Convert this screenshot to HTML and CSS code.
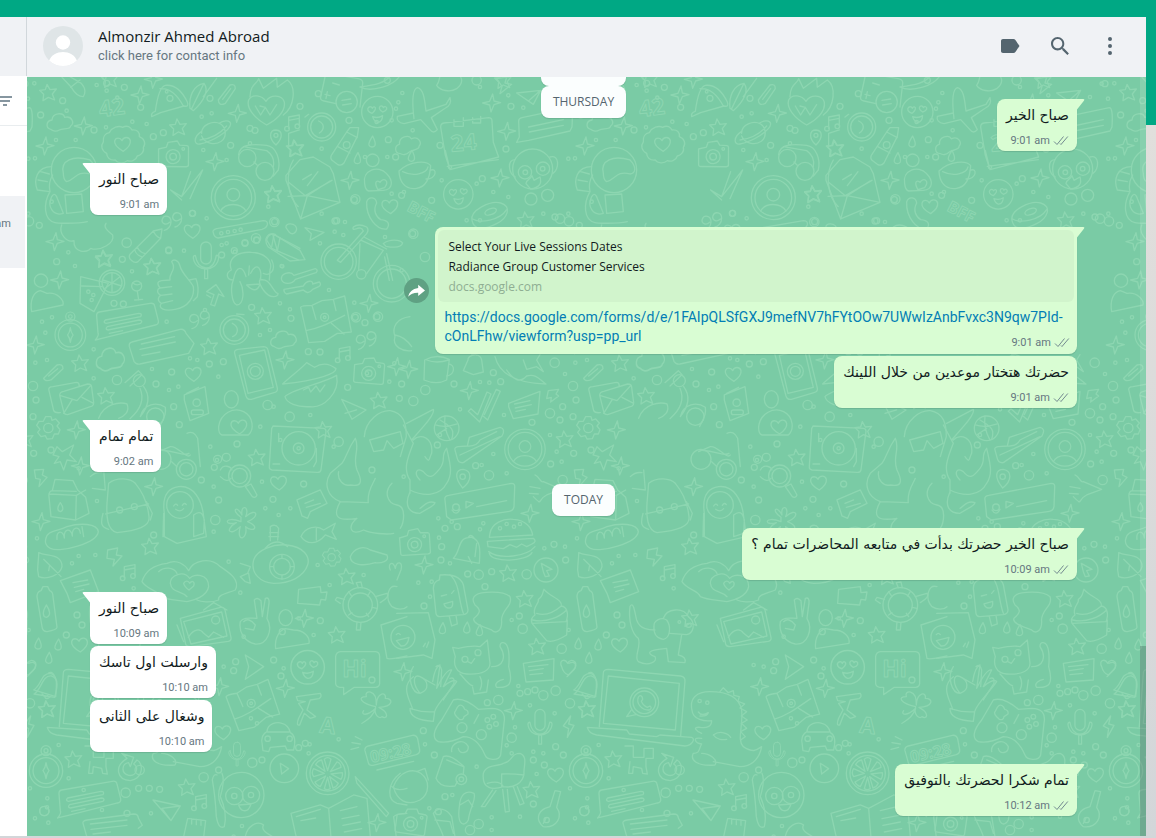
FILE: index.html
```html
<!DOCTYPE html>
<html lang="en">
  <head>
    <meta charset="UTF-8" />
    <meta name="viewport" content="width=device-width, initial-scale=1.0" />
    <title>Almonzir Ahmed Abroad</title>
    <link rel="stylesheet" href="styles.css">
  </head>
  <body>
    <!-- shared icons -->
    <svg class="defs" width="0" height="0" aria-hidden="true">
      <symbol id="ticks" viewBox="0 0 16 11">
        <path d="M1 6.500 4 9.500 10.500 1.500M7 8.500 8 9.500 14.800 1.500" />
      </symbol>
      <symbol id="tail-out" viewBox="0 0 8 13">
        <path d="M0 0h6.200c1.300 0 1.500.8.700 1.700L0 10.500z" />
      </symbol>
      <symbol id="tail-in" viewBox="0 0 8 13">
        <path d="M8 0H1.800C.5 0 .3.800 1.100 1.700L8 10.500z" />
      </symbol>
    </svg>

    <div class="app">
      <aside class="side">
        <div class="side-header"></div>
        <div class="side-search">
          <button type="button" class="icon-button" aria-label="Filter chats">
            <svg width="20" height="20" viewBox="0 0 20 20"><path d="M3 6h14M5 10h10M8 14h4" /></svg>
          </button>
        </div>
        <div class="side-row"></div>
        <div class="side-row active"><span>am</span></div>
      </aside>

      <main class="chat">
        <header class="chat-header">
          <svg class="avatar" width="40" height="40" viewBox="0 0 40 40" aria-hidden="true">
            <clipPath id="round"><circle cx="20" cy="20" r="20" /></clipPath>
            <g clip-path="url(#round)">
              <rect width="40" height="40" fill="#dfe5e7" />
              <circle cx="20" cy="16.500" r="7.200" fill="#fff" />
              <path d="M6 35c2-6 8-9 14-9s12 3 14 9l-4 5H10z" fill="#fff" />
            </g>
          </svg>
          <div class="contact">
            <h1>Almonzir Ahmed Abroad</h1>
            <p>click here for contact info</p>
          </div>
          <div class="actions">
            <button type="button" class="icon-button" aria-label="Label">
              <svg width="24" height="24" viewBox="0 0 24 24"><path d="M5 5h10.500c.8 0 1.400.4 1.900 1L21.500 12l-4.100 6c-.5.600-1.100 1-1.900 1H5c-1.200 0-2-.8-2-2V7c0-1.200.8-2 2-2z" /></svg>
            </button>
            <button type="button" class="icon-button" aria-label="Search">
              <svg width="24" height="24" viewBox="0 0 24 24"><path d="M15.900 14.300H15l-.3-.3c1-1.100 1.600-2.700 1.600-4.300 0-3.700-3-6.700-6.700-6.700S3 6 3 9.700s3 6.700 6.700 6.700c1.600 0 3.200-.6 4.300-1.600l.3.300v.8l5.100 5.100 1.500-1.500-5-5.200zm-6.200 0c-2.600 0-4.600-2.100-4.600-4.600s2.100-4.600 4.600-4.600 4.600 2.100 4.600 4.600-2 4.600-4.600 4.600z" /></svg>
            </button>
            <button type="button" class="icon-button" aria-label="Menu">
              <svg width="24" height="24" viewBox="0 0 24 24"><path d="M12 7a2 2 0 1 0 0-4 2 2 0 0 0 0 4zm0 7a2 2 0 1 0 0-4 2 2 0 0 0 0 4zm0 7a2 2 0 1 0 0-4 2 2 0 0 0 0 4z" /></svg>
            </button>
          </div>
        </header>

        <div class="conversation">
          <!-- doodle wallpaper, one 540px tile repeated sideways -->
          <svg class="wallpaper" aria-hidden="true">
            <defs>
              <marker id="m-dot" class="doodle-mark" viewBox="-20 -20 40 40" markerWidth="40" markerHeight="40" markerUnits="userSpaceOnUse"><circle r="5" /></marker>
              <marker id="m-ring" class="doodle-mark" viewBox="-20 -20 40 40" markerWidth="40" markerHeight="40" markerUnits="userSpaceOnUse"><circle r="9" /></marker>
              <marker id="m-big" class="doodle-mark" viewBox="-20 -20 40 40" markerWidth="40" markerHeight="40" markerUnits="userSpaceOnUse"><circle r="14" /></marker>
              <marker id="m-star" class="doodle-mark" viewBox="-32 -32 64 64" markerWidth="64" markerHeight="64" markerUnits="userSpaceOnUse"><path d="M-4-25 5-9 24-11 12 4 19 22 0 14-16 24-14 5-26-7-9-9z" /></marker>
              <marker id="m-spark" class="doodle-mark" viewBox="-32 -32 64 64" markerWidth="64" markerHeight="64" markerUnits="userSpaceOnUse"><path d="M3-27 7-6 27-1 7 5-2 27-6 6-27 0-6-5z" /></marker>
              <marker id="m-heart" class="doodle-mark" viewBox="-32 -32 64 64" markerWidth="64" markerHeight="64" markerUnits="userSpaceOnUse"><path d="M2 22C-12 14-26 2-24-9-21-21-7-20-2-10 3-23 20-22 23-10 25 2 13 14 2 22z" /></marker>
              <marker id="m-drop" class="doodle-mark" viewBox="-20 -20 40 40" markerWidth="40" markerHeight="40" markerUnits="userSpaceOnUse"><path d="M2-18C8-6 12 2 9 10 5 17-6 17-9 9-11 2-4-8 2-18z" /></marker>

              <g id="speech">
                <path d="M-88-30Q-89-40-80-42L72-68Q84-70 86-60L97-16Q99-5 88-3L-60 34-92 42Q-80 28-84 20z" />
                <path d="M-62-18 38-38Q50-38 44-28L-60-8Q-70-10-62-18zM-56 2 40-18Q52-16 44-8L-54 12Q-64 10-56 2zM-50 22-10 14" />
              </g>
              <g id="love-face">
                <circle r="47" />
                <path d="M-16 4C-28 0-32-8-26-14-20-18-16-14-15-11-12-18-4-16-6-8-8-2-12 0-16 4zM16 0C6-6 4-12 8-17 13-20 17-17 18-13 22-19 30-16 28-8 26-3 20-1 16 0zM-14 14Q2 20 16 11 14 32 0 31-10 28-14 14z" />
              </g>
              <g id="camera-doodle">
                <path d="M-42-20-18-24-12-38 16-40 22-27 44-24Q48-23 48-18L44 34Q44 39 36 39L-38 33Q-46 33-45 26z" />
                <circle r="21" cy="6" /><circle r="10" cy="6" /><circle cx="32" cy="-15" r="4" />
              </g>
              <g id="note"><path d="M-14 16V-18L18-24V8M-14-8 18-14" /><circle cx="-19" cy="17" r="7" /><circle cx="12" cy="10" r="7" /></g>
              <g id="mic"><rect x="-16" y="-44" width="32" height="66" rx="16" /><path d="M-32-4Q-38-4-38 4C-32 48 32 48 38 4Q38-5 31-4 24 34 0 34-26 32-32-4zM-4 38V66H5V38" /></g>
              <g id="crayon"><path d="M-50 28 20-42 46-48 42-20-26 50Q-36 56-46 46-56 38-50 28zM20-42Q28-24 42-20M-36 14Q-32 30-14 36M-28 6Q-22 22-4 26" /></g>
              <g id="cloud"><path d="M-30 24C-46 20-44-2-26-4-24-26 8-28 12-12 34-18 42 6 30 14 30 26 4 20-4 26-12 32-24 30-30 24z" /></g>
              <g id="quotes"><path d="M-8 2C-20 14-34 4-30-8-24-22-4-18-4 0-4 14-14 24-24 26M24-8C12 4-2-6 2-18 8-32 28-28 28-10 28 4 18 14 8 16" /></g>
              <g id="map"><path d="M-72-40Q-70-46-38-46L-8-60 26-64 60-74 80 34 38 38 0 62-48 66zM-38-46-26-4M26-64 34-30M-56 30C-20 24 0 14 60-16M20 8 58 40M-48 66-56 30" /><circle cx="0" cy="-10" r="12" /><circle cx="0" cy="-10" r="4" /></g>
              <g id="gear"><path d="M-8-34H8L11-23 22-27 33-15 26-6 35 5 30 18 18 18 12 32-4 33-9 23-22 26-32 13-25 4-35-8-28-20-15-20z" /><circle r="14" /></g>
              <g id="compass"><circle r="50" /><circle r="39" /><circle cy="-60" r="15" /><circle cy="-60" r="6" /><path d="M0-24Q2-8 9 0 2 8 0 24-2 8-9 0-2-8 0-24z" /></g>
              <g id="user-ring"><circle r="66" /><circle r="55" /><circle cy="-9" r="19" /><path d="M-38 40C-24 14 22 14 38 40" /></g>
              <g id="double-check"><path d="M-50 14-42 6-22 24 6-44 18-38-16 46zM-2 24 34-52 46-46 8 40-6 28" /></g>

              <g id="tile" class="doodle">
                <g transform="translate(-27 -77) scale(.3333)">
                  <polyline class="dots" points="103,250 313,233 290,255 320,272 352,293 200,332 318,382 397,365 168,420 227,420 440,372 605,350 84,296 635,340 105,475 610,450 680,480 750,430 805,620 155,605 620,655 552,752 680,730 705,755 205,757 225,798" />
                  <polyline class="rings" points="188,302 122,345 490,398 460,410 692,436 320,250 373,262 750,385 630,295 578,640 118,676 824,665 506,750 422,322 282,390 735,730 170,785 367,778 665,765" />
                  <polyline class="bigs" points="380,728 87,664 768,715" />
                  <polyline class="stars" points="145,278 535,382 330,238 820,583 313,775 458,800 885,445" />
                  <polyline class="sparks" points="250,378 420,285 712,340 135,438 645,485 165,725 460,238" />
                  <polyline class="hearts" points="577,693 368,432" />
                  <text class="outline-text" x="300" y="352" transform="rotate(-8 300 352)">42</text>
                  <path d="M186 232 214 262Q230 290 250 290 262 270 244 250L210 230M212 262 240 240" />
                  <path d="M455 350Q452 338 466 334 476 260 496 256 536 252 562 306 568 322 552 318L482 338zM480 266Q520 262 550 318" /><circle cx="510" cy="295" r="9" /><circle cx="500" cy="275" r="4" />
                  <path d="M570 325C566 290 580 255 612 250 628 270 612 305 580 332zM612 250 575 326M610 290 650 235" />
                  <path d="M655 300 690 255Q706 250 706 266L676 310Q656 320 655 300zM668 298 692 266" />
                  <path d="M800 375C765 355 738 325 746 300 756 280 786 286 798 304 812 282 846 284 853 306 858 336 826 362 800 375zM750 290C752 250 770 255 776 236L790 265 830 235 832 262 862 240C890 260 884 320 850 345" />
                  <path d="M766 318 782 345 796 322 810 345 830 314M780 318 796 322" />
                  <path d="M368 382C382 374 392 382 396 390 412 388 420 398 418 410 434 416 438 432 430 442 434 456 422 466 412 468 408 482 392 486 382 482 372 492 352 490 346 480 330 482 320 472 320 460 304 452 302 436 310 426 308 410 316 400 328 398 336 382 356 376 368 382z" />
                  <use href="#cloud" x="182" y="364" />
                  <path d="M605 400C604 374 640 360 662 372 680 384 680 412 664 424 644 438 614 430 605 408M605 394C580 410 580 436 600 432 640 424 690 392 692 372 690 356 666 364 658 370M600 420Q650 414 680 378" />
                  <use href="#camera-doodle" transform="translate(519 464) rotate(-4)" />
                  <circle cx="222" cy="510" r="68" />
                  <path d="M190 520C180 480 220 465 270 480 290 500 288 520 270 522 230 510 225 540 200 545 190 540 190 530 190 520zM155 500C110 500 100 540 112 570L150 575C144 550 155 530 158 525M122 515 148 522M114 540 142 545M150 575C130 610 130 660 165 668 170 670 230 672 262 665M155 590C140 620 160 650 190 640L170 590C165 580 160 582 155 590z" />
                  <path d="M195 585 245 582 250 635 200 640zM185 675C175 700 200 730 222 722 220 760 262 760 272 745 300 755 345 730 338 705 320 690 310 680 318 670" />
                  <path d="M512 570 545 590 572 515M545 590 608 510 570 596M512 570 545 600" />
                  <use href="#user-ring" x="700" y="593" />
                  <use href="#quotes" x="517" y="665" />
                  <path d="M640 698Q636 690 650 686L790 662Q804 662 802 674 800 684 786 688L654 714Q642 712 640 698z" />
                  <polyline class="dots" points="664,700 684,696 704,693 722,689" />
                  <use href="#crayon" transform="translate(440 735)" />
                  <use href="#mic" x="618" y="770" />
                  <path d="M828 435C805 415 808 390 828 390 850 392 848 415 828 435z" /><circle cx="828" cy="406" r="6" />
                  <circle cx="742" cy="474" r="26" /><circle cx="795" cy="514" r="27" />
                  <path d="M716 464C720 430 760 432 800 436 830 440 842 480 835 510L820 528M762 486 772 496M730 440 800 452Q826 470 820 500" />
                  <path d="M866 440V400L898 390M880 480C855 520 862 590 895 620" />
                  <path d="M800 720C806 700 824 698 830 708L900 745M800 720 815 745 895 780M818 702 832 752" />
                </g>

                <g transform="translate(223) scale(.3333)">
                  <polyline class="dots" points="457,48 438,95 425,130 445,76 380,135 488,160 412,240 215,215 345,240 775,55 820,92 690,30 935,20 900,60 425,350 462,345 600,270 575,310 680,320 955,245 730,345 690,430 775,360 215,410 285,435 97,568 455,580 405,480 650,430 880,410 955,410" />
                  <polyline class="rings" points="15,160 150,88 297,130 415,188 437,240 205,50 783,88 768,216 697,305 313,368 545,370 455,355 412,10 255,432 488,470 915,420 945,20 570,205 20,490" />
                  <polyline class="bigs" points="680,10 490,470 930,425 525,540" />
                  <polyline class="stars" points="137,215 70,353 828,430 760,10" />
                  <polyline class="sparks" points="300,310 725,78 770,163 750,303" />
                  <polyline class="drops" points="366,195 322,245 484,238" />
                  <polyline class="hearts" points="420,388" />
                  <path d="M225 0 212 60Q210 70 222 72L258 80M240-10 325 5Q340 8 338 20L330 90M225 52 240 56M232 44 228 64M248 18 268 24" /><circle cx="290" cy="75" r="32" /><path d="M276 70 302 66M278 84 304 80" />
                  <path d="M330 30C370 25 410 20 425-10M330 30C360 46 440 30 455-15M560 25C575 5 560-10 590-15 640-15 645 15 620 35 600 48 570 40 560 25z" />
                  <use href="#love-face" x="382" y="105" />
                  <circle cx="215" cy="150" r="42" /><circle cx="215" cy="150" r="33" /><path d="M206 132C224 140 224 158 208 168M165 120 176 112" />
                  <use href="#note" x="130" y="138" />
                  <path d="M244 235 290 165 300 152 326 152 322 178 282 258Q274 268 262 262L246 250Q240 244 244 235zM290 165 322 182M262 208 300 228" /><circle cx="290" cy="204" r="10" />
                  <path d="M108 295 150 248 190 240 240 270 250 290 270 376 152 426 108 310zM114 358 172 356 240 312M172 356 270 376M172 356 152 426M115 315 166 356 246 310" /><path d="M158 308 184 292M172 326 204 284" />
                  <use href="#cloud" transform="translate(475 200) rotate(-12)" />
                  <path d="M492 125C486 75 488 35 503 32 522 38 524 70 528 102L588 82 600 62Q608 84 582 96L544 122 562 158Q550 172 540 158L512 128 462 140Q438 136 442 118L490 108" />
                  <path d="M572 150Q572 140 582 138L716 122Q726 122 726 132L730 196 746 240 600 278 586 235zM586 220 600 278M592 268 745 248M612 128V148H640V122M668 122V138H692V118" />
                  <text class="outline-text" x="604" y="224" transform="rotate(-5 604 224)">24</text>
                  <path d="M447 282C480 250 530 250 542 266 540 300 530 330 500 334 462 340 448 310 447 282zM458 284C490 300 530 290 534 270M540 280C564 270 560 308 528 306" />
                  <circle cx="368" cy="250" r="19" />
                  <path d="M344 320C336 280 384 262 410 290 430 310 430 338 400 340L356 342Q346 340 344 320zM384 338C372 318 378 306 390 316 400 300 420 310 404 332z" />
                  <path d="M350 375C356 356 378 360 380 378 368 400 378 420 392 428 414 430 422 440 410 456 380 460 348 420 350 375z" />
                  <use href="#love-face" transform="translate(625 352) scale(.94)" />
                  <text class="outline-text small" x="468" y="400" transform="rotate(28 468 400)">BFF</text>
                  <path d="M666 430C660 400 720 370 752 378 788 388 772 424 740 440 700 460 672 460 666 430zM668 426C690 440 750 430 770 398" /><ellipse cx="722" cy="404" rx="18" ry="9" transform="rotate(-20 722 404)" />
                  <circle cx="848" cy="276" r="60" /><circle cx="825" cy="286" r="20" /><circle cx="879" cy="275" r="20" /><circle cx="826" cy="286" r="7" /><circle cx="878" cy="275" r="7" /><circle cx="843" cy="366" r="18" /><circle cx="893" cy="355" r="18" />
                  <path d="M795 248C770 250 776 290 796 300M900 240C930 232 928 275 908 290M828 320C830 305 840 310 846 296L852 310 870 300Q880 330 842 336z" />
                  <path d="M806 132Q806 124 816 122L958 92Q970 92 966 150L960 162 836 190 800 196 808 180zM836 150 940 128M838 165 940 145" />
                  <path d="M800 48 872 40 850 82zM872 40 838 70M740 5 770 0 765 18 785 22 750 50 756 28z" />
                  <!-- bicycle -->
                  <circle cx="266" cy="554" r="53" /><circle cx="266" cy="554" r="43" /><circle cx="425" cy="620" r="55" /><circle cx="425" cy="620" r="44" />
                  <path d="M262 550 340 462Q334 448 318 456 306 460 310 450 326 438 350 450 358 458 350 470L272 556zM334 490 400 520 350 590M342 480 410 516M330 500 326 580M404 540 418 610M410 530 428 610M400 500C420 485 450 488 458 498 455 512 430 512 408 508z" /><circle cx="334" cy="592" r="14" />
                  <path d="M48 485Q56 466 72 472L150 520 165 548 120 552 55 510Q46 500 48 485zM72 472 65 510M90 482 82 522" />
                  <path d="M165 452 222 466 180 490 184 470zM108 452C104 436 138 436 140 456 138 470 126 474 118 466z" />
                </g>

                <g transform="translate(63 103) scale(.3333)">
                  <polyline class="dots" points="395,195 575,258 126,274 230,425 300,535 322,540 186,567 237,630 265,620 570,370 540,450 510,465 600,388 385,590 345,390 717,330 793,368 734,155 760,165 690,190" />
                  <polyline class="rings" points="307,100 236,212 465,188 500,180 485,382 603,415 400,545 245,576 198,612 358,552 72,370 100,372 740,122 825,428 655,515 690,516 433,212" />
                  <polyline class="bigs" points="553,126 864,410 796,58 798,412" />
                  <polyline class="stars" points="187,260 42,238 550,42 358,500 520,408 867,662" />
                  <polyline class="sparks" points="837,370 585,540 920,560" />
                  <polyline class="hearts" points="310,582" />
                  <path d="M240 300C235 280 262 270 245 245 250 236 266 240 270 258 275 280 300 300 310 320 315 350 295 382 255 388 225 395 202 385 214 370 200 362 205 350 212 346 198 338 202 326 210 324 200 310 202 304 215 302zM210 324 245 320M212 346 246 342M214 370 248 362M298 300 318 296Q328 322 322 350L310 362" />
                  <circle cx="66" cy="308" r="38" /><circle cx="66" cy="308" r="30" /><path d="M66 278V338M38 300 95 318M42 328 90 290" />
                  <path d="M-28 290 55 310 12 395-30 370zM-25 318 36 320" /><polyline class="dots" points="-5,335 10,345 5,360" />
                  <circle cx="140" cy="318" r="15" /><path d="M128 308Q140 320 154 310M142 334 146 360M134 360 158 358" />
                  <path d="M350 335 378 314 402 350 386 342 374 378 362 374 372 344zM362 352 350 345" />
                  <path d="M424 270C410 230 450 215 485 217 520 218 550 240 540 270L538 300M424 270C405 280 410 300 430 300 440 250 460 260 468 290M430 300C420 320 425 370 440 375 462 375 464 330 450 305M545 240C560 270 540 290 520 280M478 258 476 285M482 280C500 240 520 270 510 300 540 290 550 340 564 340 566 352 540 358 520 330 500 300 510 295 520 300M470 315 510 312Q500 345 470 315z" />
                  <path d="M575 300C570 282 600 270 612 286L676 266Q686 270 678 278L616 298C604 316 580 312 575 300zM582 328 640 318C650 300 670 300 668 312L688 306Q696 314 686 320L668 328C655 345 646 335 640 330L590 342Q580 336 582 328z" />
                  <use href="#speech" x="108" y="438" />
                  <path d="M118 500Q116 488 126 486L270 448Q284 446 288 460L312 490 296 520 150 552Q138 554 132 544zM154 492 254 470M150 508 256 486M156 526 210 516" />
                  <use href="#cloud" transform="translate(64 534) scale(1.1 1.300)" />
                  <use href="#cloud" transform="translate(583 476)" />
                  <use href="#quotes" x="330" y="420" /><use href="#quotes" x="830" y="482" />
                  <circle cx="433" cy="450" r="43" /><circle cx="433" cy="450" r="33" /><path d="M427 430C448 440 446 462 428 470M440 402 462 404" />
                  <use href="#map" x="704" y="422" />
                  <use href="#note" x="762" y="524" />
                  <path d="M434 520Q432 510 444 508L520 500Q532 500 534 510L562 624Q564 636 552 638L484 658Q472 660 468 648zM448 526 524 510 550 622 474 640zM474 520 496 516" /><circle cx="496" cy="574" r="24" /><circle cx="496" cy="574" r="15" />
                  <path d="M578 612C600 590 630 570 650 548 664 556 670 560 674 562 700 545 720 552 738 566 738 580 690 600 578 612zM585 650C600 630 700 610 740 586 750 640 700 685 660 680 620 682 590 670 585 650zM640 630 656 622 662 636 678 618 690 636 705 615" />
                  <use href="#camera-doodle" transform="translate(836 574)" />
                  <path d="M283 645 345 620 356 700 300 722 283 660zM290 640 326 622" /><circle cx="320" cy="668" r="11" /><rect x="304" y="690" width="36" height="14" rx="6" />
                  <ellipse cx="424" cy="658" rx="21" ry="26" />
                  <path d="M105 608 145 572 156 584 120 618M150 625C165 660 150 690 120 716" /><circle cx="148" cy="602" r="18" />
                  <path d="M755 658 828 690 786 718zM765 700 800 690" />
                  <path d="M960 410C920 415 905 440 915 470 905 500 940 516 965 512M915 465Q945 470 965 500" />
                </g>

                <g transform="translate(0 193) scale(.3333)">
                  <polyline class="dots" points="45,155 55,188 75,142 200,238 200,325 25,278 60,270 155,595 560,650 705,635 790,715 920,530 1020,310 850,435 740,410 570,570 550,530 30,805 210,693 715,715 760,510 700,470 755,735 1130,620 560,785" />
                  <polyline class="rings" points="20,550 72,540 440,410 457,464 380,795 575,690 630,522 738,688 523,630 830,642 1035,600 962,352 985,142 18,440 27,390 1050,140" />
                  <polyline class="bigs" points="18,348 722,405 788,440 565,750 935,515 270,330" />
                  <polyline class="stars" points="238,378 160,280 690,563 890,480 370,830" />
                  <polyline class="sparks" points="25,225 148,480 380,650 42,755 160,588 98,30" />
                  <polyline class="hearts" points="755,638 636,470" />
                  <circle cx="42" cy="32" r="20" /><path d="M14 125C8 90 20 65 40 62L60 70C90 65 112 90 108 105z" />
                  <use href="#compass" transform="translate(130 195) scale(.92)" />
                  <path d="M50 325 90 285Q108 280 108 296L72 330Q54 336 50 325zM65 318 92 296" />
                  <path d="M78 350Q62 350 66 362L80 422Q84 430 100 428M78 350 148 337Q158 337 156 350M98 376Q98 366 110 364L182 342Q194 342 194 352L200 398Q200 408 190 410L122 434Q110 434 110 424zM98 376 150 392 190 348M110 430 136 388M200 400 165 382" />
                  <use href="#gear" x="64" y="474" />
                  <path d="M78 555 90 530 106 545 140 525 128 555 148 575 120 570 110 600 100 575 82 580 96 560zM22 600 50 598 46 615 60 622 36 650 40 628 26 625z" />
                  <path d="M215 445C230 400 280 395 300 402 310 425 290 440 275 445M340 440C350 400 390 395 415 412 420 440 400 460 398 470M350 350Q380 390 340 440" /><circle cx="385" cy="440" r="26" />
                  <path d="M575 470C580 430 620 410 650 425 680 440 682 480 664 495L585 495Q574 492 575 470z" />
                  <path d="M738 468 890 475Q898 476 897 485L882 600Q880 608 870 607L735 600Q726 598 727 590L734 476zM755 490V515M868 535V575L860 590M738 582H758" /><circle cx="815" cy="535" r="50" /><circle cx="815" cy="535" r="16" /><circle cx="815" cy="535" r="5" />
                  <path d="M66 680Q64 664 76 662L84 628 138 632 152 660 176 682 186 730 146 750 72 740zM66 672 148 676 146 750M76 662 148 664M148 676 176 660" /><path d="M100 698C90 712 90 722 100 725 110 722 110 712 100 698z" />
                  <path d="M56 808C60 780 90 785 120 770 160 758 210 760 214 785 210 820 100 850 70 835 56 830 54 815 56 808zM90 808C86 780 110 780 112 804 110 775 132 772 136 798 134 770 158 766 160 790M165 770 170 800" />
                  <path d="M190 620Q205 605 225 608M196 655 235 660 230 600M245 640C270 620 310 625 325 640 350 670 362 700 366 740 370 770 330 782 270 788 240 780 238 740 240 700zM236 732 365 702M228 730C220 760 222 772 245 778M358 695 376 730 370 750" /><circle cx="278" cy="720" r="9" /><circle cx="322" cy="710" r="9" />
                  <path d="M412 800V730C405 680 420 655 455 650 500 645 525 690 530 740L538 800 450 820zM500 735Q525 715 532 750L530 790 500 800zM410 730 408 800" /><circle cx="459" cy="705" r="40" /><path d="M440 708Q446 698 452 706M466 706Q472 696 478 704M446 718Q460 728 470 716" />
                  <path d="M395 545 430 530C450 525 480 570 490 555M480 490Q500 480 512 505L520 590M400 540C460 545 470 560 486 550M434 575 450 590" /><circle cx="402" cy="568" r="30" /><circle cx="478" cy="598" r="30" /><circle cx="478" cy="598" r="20" />
                  <circle cx="572" cy="568" r="12" /><circle cx="598" cy="562" r="12" /><circle cx="562" cy="592" r="9" /><path d="M580 600C590 580 612 590 615 600M580 620Q600 640 612 625" /><circle cx="638" cy="618" r="33" /><circle cx="638" cy="618" r="23" /><path d="M655 650 672 642 690 675Q686 686 676 680z" />
                  <path d="M642 742C610 720 630 704 645 735 640 700 670 710 656 740 690 710 700 740 662 755 700 770 680 790 656 770 664 810 626 820 640 770 610 800 590 780 628 758 590 770 590 735 642 755z" />
                  <path d="M810 690 880 660 900 700 850 725 842 745 825 738zM834 700 860 690M838 712 880 700" />
                  <path d="M822 800C835 770 870 765 890 780L925 760 915 785 928 808 895 795C870 825 840 825 822 800zM868 775V810" /><path d="M730 770Q745 760 755 775L752 810M730 770V812M728 788H755M726 800H755M715 835Q745 800 782 830" />
                  <path d="M1012 500C1015 450 1060 420 1090 422 1130 430 1138 460 1138 500L1120 560M1028 510 1120 485 1128 520 1100 535 1080 512 1070 540 1040 545zM985 505C960 540 960 560 945 580L910 610C890 640 900 680 940 695L1024 698C1020 660 1040 640 1045 625M985 505C1000 540 975 560 990 600 1010 640 1000 650 970 645 950 650 930 630 935 605M940 695C915 740 930 755 990 745 960 770 970 800 1010 780 1030 790 1080 795 1100 790M1095 640C1070 665 1080 700 1110 705 1140 710 1130 760 1120 775" />
                </g>

                <g transform="translate(353 263) scale(.3333)">
                  <polyline class="dots" points="43,70 28,125 240,208 372,225 555,102 545,365 510,285 340,342 380,400 305,375 530,335 180,285 300,126 328,128" />
                  <polyline class="rings" points="65,132 58,175 340,98 456,247 548,200 172,315 287,377 362,125 512,372 222,132 540,240" />
                  <polyline class="bigs" points="136,150 100,183 524,68 510,220 327,406 548,420" />
                  <polyline class="stars" points="555,298" />
                  <polyline class="sparks" points="86,88 268,152 450,520" />
                  <path d="M134 60Q170 40 208 58L200 120Q170 136 132 120zM206 72C226 74 226 104 200 108M140 60Q170 72 206 60" />
                  <path d="M250 92 264 60C262 44 300 36 305 60L310 96 280 104zM275 44Q282 36 290 46" />
                  <path d="M345 50C360 110 420 130 498 132 480 120 470 100 440 108 420 130 400 120 380 90M430 60 440 88 470 80 490 95 470 60 480 44" />
                  <use href="#double-check" x="315" y="200" />
                  <path d="M386 190 480 154 474 222 400 236 386 200zM404 192 450 182M406 204 454 194M408 214 436 208" />
                  <path d="M505 152 536 148 528 162 536 168 512 186 514 172 500 176z" />
                  <circle cx="200" cy="265" r="37" /><path d="M166 255Q195 265 232 252M195 228Q190 265 210 300M180 240C215 260 225 270 215 298M170 285 200 265" />
                  <path d="M225 330Q222 322 234 320L262 318 268 292 360 262Q378 266 366 288L250 368Q236 370 232 356zM262 318Q290 320 300 300L350 275M240 345 360 290" />
                  <use href="#user-ring" transform="translate(435 328) scale(.92)" />
                  <path d="M248 444C220 410 228 388 250 388 275 392 278 420 248 444z" /><circle cx="248" cy="410" r="8" />
                  <path d="M195 480Q192 468 206 466L394 430Q406 430 404 444L402 500Q400 512 388 514L214 540 200 530zM258 484V504L280 490zM290 500 380 482" /><circle cx="228" cy="502" r="10" /><path d="M216 510Q228 530 240 508" />
                  <path d="M80 250 160 208Q165 220 130 260L95 300M70 255 100 310C80 360 70 390 90 420L90 460M100 300C120 280 160 290 155 340 145 360 150 370 135 350M200 325C180 350 200 360 180 385 160 410 150 420 130 395 110 380 100 400 120 420M200 325C210 370 220 400 200 430 180 470 130 470 90 450M90 455C70 500 90 520 120 520 150 500 160 500 165 488 140 480 130 500 120 505" />
                  <path d="M465 405C480 410 480 430 490 425L545 448 500 465C470 480 490 500 460 470M450 440 480 445M448 460 475 462" />
                </g>

                <g transform="translate(373 323) scale(.3333)">
                  <polyline class="dots" points="155,365 115,355 250,370 240,388 117,413 433,445 150,490 495,440 55,548 90,590 335,660 95,545" />
                  <polyline class="rings" points="135,385 203,522 275,515 125,440 123,480 255,560 497,480 358,648 462,433 72,618 172,380" />
                  <polyline class="bigs" points="236,524 368,686 380,523" />
                  <polyline class="stars" points="325,520 375,597 412,740" />
                  <polyline class="sparks" points="72,495" />
                  <polyline class="drops" points="127,686 200,684 238,692" />
                  <path d="M270 400C275 370 310 355 340 358 380 360 395 385 398 405L268 412zM262 424 400 415Q412 425 396 432L380 440 365 432 350 442 330 434 310 446 264 440zM266 455C300 480 380 470 405 440M268 460C275 490 380 485 396 458" />
                  <polyline class="dots" points="300,385 320,372 342,380 360,372" />
                  <path d="M160 475C185 450 170 410 215 412 245 420 240 460 238 490zM205 412Q212 400 222 414M205 470 215 490M230 430 225 470" />
                  <circle cx="438" cy="510" r="36" /><path d="M424 490 456 508 440 512 448 528 436 530 430 515z" />
                  <use href="#camera-doodle" transform="translate(43 428) rotate(-8)" />
                  <path d="M100 565Q100 545 118 540L120 525C170 520 190 540 192 565L204 630Q204 642 190 644L120 650Q110 650 108 640zM150 524C180 550 175 600 190 640M148 650 155 678 172 672 168 646M124 588 140 584M155 580 162 572M132 612 158 604Q160 626 146 624 136 624 132 612z" />
                  <path d="M228 585C240 575 310 570 330 590 340 620 300 630 305 665 305 690 290 705 275 690 250 680 215 670 222 655 240 640 245 630 225 615 215 600 220 590 228 585z" />
                  <path d="M405 645C395 620 420 610 415 598 430 590 428 575 432 568 450 590 490 600 484 618 500 620 508 640 498 665L396 670Q390 655 405 645zM410 640C440 650 470 630 484 618M398 660C440 670 480 650 500 630M396 670 440 722Q460 730 500 705L502 660" />
                  <path d="M-10 640 85 638 105 720 96 775 70 765-10 775" /><path d="M70 740 76 730M80 742 86 726" />
                  <path d="M158 742 175 745Q220 735 240 740L262 720 270 790C270 810 250 825 200 822 165 820 160 790 166 770zM180 822C190 830 200 850 218 858M310 728C330 730 328 780 326 800 340 850 330 865 290 862 280 850 300 840 310 838M240 870Q250 850 240 830M218 862 222 882 260 876 265 840M275 800C310 800 320 770 300 740Q300 726 310 728" /><circle cx="195" cy="778" r="9" /><circle cx="234" cy="758" r="9" /><path d="M202 784 214 790 224 776" />
                  <path d="M370 790 462 776 460 840 378 846zM386 800 444 794M388 812 430 806M390 824 428 820" />
                  <path d="M485 800C475 780 495 775 503 790 510 775 535 780 525 805L505 825Q490 820 485 800z" />
                  <path d="M40 800C20 830 35 880 60 880 90 870 85 840 60 830 40 820 35 850 60 880M60 830 105 855M108 800Q120 790 125 810L122 860M150 835Q165 830 162 850L130 900" />
                </g>

                <g transform="translate(373 543) scale(.3333)">
                  <polyline class="dots" points="355,198 390,256 464,280 345,322 320,376 335,400 75,373 410,462 88,565 157,525 230,440 275,592 360,590 275,630 510,505 525,595 565,608 400,395 430,400 562,535" />
                  <polyline class="rings" points="360,220 383,215 405,210 70,332 103,405 467,380 400,420 433,435 490,405 135,530 115,575 400,552 262,248" />
                  <polyline class="bigs" points="467,212 430,226 295,240 335,353 236,612 553,573 210,630 510,250 485,86" />
                  <polyline class="stars" points="562,268 395,510" />
                  <polyline class="sparks" points="340,272" />
                  <polyline class="hearts" points="467,464" />
                  <path d="M30 265Q28 300 100 304L104 275Q70 278 40 268zM38 268C30 240 0 200 40 170M104 275C110 250 150 215 170 185 165 175 140 190 130 200L155 150Q140 145 110 205L120 135Q105 140 98 185" />
                  <path d="M160 240C190 230 220 255 235 268L275 265C305 265 318 280 312 310L302 405C295 425 260 420 255 405 240 370 220 350 190 350 160 365 140 370 115 365 95 355 100 330 125 300zM172 262Q180 250 190 260L194 268Q206 270 204 282L192 290Q190 302 178 298L170 290Q160 280 166 274zM222 310 236 284" /><circle cx="186" cy="323" r="15" /><circle cx="244" cy="344" r="15" /><circle cx="262" cy="300" r="7" /><circle cx="280" cy="290" r="7" /><circle cx="268" cy="320" r="7" /><circle cx="288" cy="312" r="7" />
                  <use href="#mic" transform="translate(420 310) scale(.95)" />
                  <path d="M490 318 512 288 506 312 522 316 502 352 506 326z" />
                  <path d="M522 222C545 210 545 165 575 168 600 175 590 210 584 232zM565 160Q574 152 582 165M555 232Q560 240 570 230" />
                  <path d="M130 410 108 475Q120 505 165 498L172 485M130 410Q150 400 192 440L190 460M140 420 190 440M155 395C150 370 190 350 205 380 205 400 180 405 175 385" /><circle cx="184" cy="478" r="16" /><circle cx="184" cy="478" r="7" />
                  <path d="M-20 500C0 450 40 445 62 460 90 480 90 520 60 540 20 560-10 540-20 500zM50 455 75 445 85 480" />
                  <path d="M250 460C260 430 300 440 310 430 340 425 330 400 360 400 385 410 370 440 372 460 370 490 340 505 310 500 280 510 245 510 250 460zM262 490Q300 480 310 500M305 500V462Q330 460 372 465M278 510 244 560 255 560 288 512M308 508 316 576 328 574 322 508M340 500 360 555 372 550 352 500" />
                  <path d="M178 560C180 520 200 510 222 520 230 540 210 560 205 600 195 620 170 620 178 560zM180 555 205 540 218 560M100 580C115 560 140 565 155 590L165 650M100 580C110 610 125 630 130 650M105 600 150 605 160 640" />
                  <path d="M465 512 482 515 470 562C490 590 470 625 430 620 405 600 415 575 435 565L450 560zM430 610 438 595" /><circle cx="440" cy="600" r="8" />
                  <use href="#camera-doodle" transform="translate(32 606) rotate(4)" />
                </g>

                <g transform="translate(0 473) scale(.3333)">
                  <polyline class="dots" points="135,40 155,18 205,15 320,115 605,35 872,45 908,105 815,205 860,255 560,345 650,260 590,350 770,355 672,505 690,520 935,568 845,610 848,583 170,720 125,685 60,772 620,860 645,828 372,790 95,585 5,240 225,780 640,128 1010,75" />
                  <polyline class="rings" points="150,195 165,225 118,255 620,362 626,335 766,245 880,212 1035,390 815,593 762,378 740,330 835,580 398,718 335,715 367,715 575,660 705,630 300,790" />
                  <polyline class="bigs" points="296,728 530,682 676,638 52,783 338,660" />
                  <polyline class="stars" points="370,205 960,80 930,255 60,478 140,628 480,712" />
                  <polyline class="sparks" points="775,415 1128,365 832,205 578,410 1050,818" />
                  <polyline class="drops" points="33,282 93,285 65,325" />
                  <polyline class="hearts" points="158,284 588,547" />
                  <path d="M32 60C32 40 36 20 35 8 60 20 105 10 105 50 100 75 60 90 35 80zM50 28 85 62M68 45 65 62M85 62 102 80" />
                  <path d="M242 0 272-6 268 15 285 18 258 48 262 28 240 25zM100 92 190 60 215 125 130 158 120 130zM138 98 182 90M142 112 186 102M146 125 170 118" />
                  <use href="#note" x="306" y="68" />
                  <path d="M30 140Q30 125 42 122L48 110 62 110 68 122Q78 125 78 140L90 232Q90 240 60 245 46 244 45 230z" /><path d="M58 165C46 185 46 200 58 202 72 198 70 182 58 165z" />
                  <path d="M345 95C355 60 380 45 420 40 450 25 475 45 485 62 500 30 550 20 580 50 610 70 640 90 625 120 600 130 570 135 575 150 550 160 520 155 510 150M345 95C360 120 395 120 400 140 420 150 450 150 480 155 500 150 540 140 545 110 545 70 500 70 488 85 470 60 430 75 430 100 435 130 460 120 480 140M395 65C410 50 440 50 450 70" />
                  <path d="M470 100C475 90 485 92 488 100 495 90 505 95 500 108L486 120Q472 110 470 100z" />
                  <path d="M680 30C690 0 740-20 780-15 830-10 850 20 842 45 830 80 790 100 740 100 700 98 670 70 680 30zM640 40 670 50 662 70 640 80 655 95 670 100 665 70" /><circle cx="765" cy="50" r="37" /><circle cx="765" cy="50" r="25" /><path d="M765 13V25M765 75V87M728 50H740M790 50H802" />
                  <use href="#gear" transform="translate(914 22) scale(.8)" />
                  <path d="M970 20C980-5 1010-15 1030 0L1080 15C1090 35 1060 40 1045 38 1010 50 970 45 970 20z" />
                  <path d="M460 205 580 172Q590 170 594 180L612 262Q614 272 604 274L490 290Q478 290 476 282zM470 215 584 186 600 258 492 282zM484 262C500 235 520 235 530 250L545 262 560 246 590 262M450 225 470 275M530 180 560 158 600 180" /><circle cx="566" cy="210" r="12" />
                  <path d="M640 215C650 200 670 205 690 205L682 150Q690 140 702 152L706 200 715 145Q728 140 726 160L720 205C740 240 720 285 685 282 650 275 635 245 640 215zM650 215Q665 200 685 225L680 240 655 235" />
                  <path d="M815 118 880 110 882 128 900 126 896 150 882 148 878 165 812 160z" /><ellipse cx="776" cy="203" rx="20" ry="24" /><path d="M746 296C742 260 760 240 775 236L800 240C830 240 850 260 846 280z" />
                  <circle cx="1000" cy="165" r="52" /><circle cx="1000" cy="165" r="36" /><path d="M994 113 988 98 1002 96 1006 113M1045 140 1080 130Q1090 140 1060 158M940 160 925 150 930 142 952 148M990 217 988 240 1000 240 1002 217M965 125 975 140M1030 125 1022 138M1050 175 1036 172M965 195 975 188M1025 200 1018 190" />
                  <path d="M1062 225 1140 200M1062 225 1080 325Q1085 330 1140 318" /><circle cx="1128" cy="262" r="36" /><path d="M1108 272 1146 262Q1142 290 1122 288zM1108 254Q1114 246 1120 254" />
                  <path d="M1090 60C1080 40 1100 30 1105 55 1108 30 1130 35 1122 60L1110 90M1110 110C1080 100 1075 150 1095 170 1110 180 1130 180 1140 170" />
                  <path d="M655 315 710 350 655 388 665 350z" />
                  <use href="#love-face" transform="translate(842 352) scale(1.070)" />
                  <path d="M940 305H1046Q1058 306 1058 320V402Q1056 412 1046 412H982L950 434V412H938Q926 410 926 400V320Q928 306 940 305z" />
                  <text class="outline-text" x="946" y="382">Hi</text>
                  <path d="M20 420C45 405 40 370 70 370 95 375 88 410 86 440zM45 432Q55 445 62 436M5 340C30 330 28 350 20 360L0 380" />
                  <use href="#map" transform="translate(674 470) rotate(-8)" />
                  <path d="M808 440 880 430Q886 440 876 446L850 450 840 480 866 500 850 505 832 490 818 525Q806 528 815 505L828 480 815 460 835 455 812 452z" />
                  <text class="outline-text" x="876" y="548" transform="rotate(6 880 548)">A</text>
                  <path d="M1046 470C1000 460 990 440 1018 440 1010 420 1050 415 1048 465 1050 425 1080 425 1075 445 1100 445 1100 470 1056 472 1090 490 1080 510 1065 500 1055 510 1040 490 1046 475 1020 500 1000 495 1010 482M1046 472C1040 500 1020 510 1005 520" />
                  <path d="M706 585C700 560 710 550 720 545 722 520 750 515 765 520 785 525 788 540 790 548 805 555 806 575 800 600L780 600 775 588 730 592 725 605 708 602zM722 546 786 546" /><circle cx="722" cy="566" r="8" /><circle cx="788" cy="566" r="8" />
                  <use href="#mic" transform="translate(630 605) scale(.65)" />
                  <path d="M1024 588 1156 556Q1168 554 1172 566L1178 598Q1180 610 1168 614L1038 646Q1026 648 1024 638L1014 602Q1012 592 1024 588zM1050 660 1160 634" />
                  <text class="outline-text small" x="1034" y="638" transform="rotate(-12 1034 638)">09:28</text>
                  <use href="#compass" x="57" y="662" />
                  <path d="M300 625C260 650 270 690 310 692 350 685 350 640 330 630L320 642C335 650 330 680 305 676 280 670 285 640 305 638L310 650 320 622 284 610z" />
                  <circle cx="643" cy="735" r="68" /><circle cx="622" cy="738" r="26" /><circle cx="672" cy="735" r="26" /><circle cx="622" cy="738" r="8" /><circle cx="672" cy="735" r="8" /><path d="M635 765 672 762Q665 785 650 782 640 780 635 765zM570 675Q560 670 556 690 565 740 568 800 575 840 592 830 602 790 580 740 595 690 585 670 570 675zM700 665Q690 670 700 690L720 780Q730 805 748 795 750 760 730 740 725 690 715 660 700 665z" />
                  <circle cx="772" cy="655" r="43" /><path d="M760 640 785 656 764 672z" />
                  <circle cx="902" cy="670" r="64" /><circle cx="902" cy="670" r="53" /><path d="M902 662 892 628Q902 618 912 628zM910 665 930 636Q942 640 942 652zM912 672 946 668Q948 680 942 688zM908 680 934 700Q928 712 918 714zM902 682 910 716Q900 722 892 716zM896 678 880 710Q868 706 864 696zM892 670 860 680Q852 668 860 656zM894 664 866 644Q872 632 884 630z" />
                  <path d="M985 560 1005 570M975 578 1000 582M972 598 995 592M985 680 1085 790 1078 800 990 700zM1120 670C1080 700 1080 750 1110 760L1140 765M1095 710Q1110 725 1140 715" />
                  <use href="#speech" x="184" y="762" />
                  <path d="M168 820Q166 812 180 810L320 792Q334 792 334 804L346 826 334 835M168 820 180 862M190 822 300 810M192 838 300 826M198 852 250 846" />
                  <path d="M378 750 460 768 432 812zM460 768 405 775 432 812" /><use href="#note" x="520" y="758" />
                  <path d="M482 805 536 812 530 862M482 805 470 860M494 806V822M508 808V824M522 810V826" />
                  <path d="M792 790 880 765 905 775 980 735 1020 745 1030 860M905 775 912 862M792 790 808 862M808 800 880 778M822 812 866 804M940 782 990 770M945 806 996 796M948 826 1000 816M952 846 1004 836" />
                  <path d="M655 860C660 830 690 810 710 825 700 840 720 850 740 862M1100 800Q1110 790 1140 790M1100 800 1108 862" />
                </g>

                <!-- laptop, dino and dog cross the right edge of the tile -->
                <g transform="translate(373 543) scale(.3333)">
                  <path d="M610 160Q610 148 625 148L842 168Q856 170 855 184L842 348M610 160 598 320M625 168 838 190 826 330 610 310zM562 322 680 330 688 342 770 350 780 345 875 352Q884 356 878 366 870 378 855 378L590 345Q566 340 562 322z" />
                  <circle cx="733" cy="247" r="43" /><circle cx="733" cy="247" r="34" /><path d="M694 270 680 290 708 284M715 232C720 222 728 228 728 238L724 244Q730 258 742 262L750 258Q758 264 748 270C725 272 708 250 715 232z" />
                  <path d="M876 270C868 235 890 215 930 215 960 215 1015 220 1025 270 1030 320 1010 360 1030 380 1060 400 1070 390 1085 380 1080 410 1060 440 1020 440L940 425M876 270C878 300 915 305 935 302 935 320 920 325 900 322 875 320 890 335 905 340M905 355C875 350 885 370 905 372 895 390 900 400 880 400 870 420 890 440 945 435 955 420 930 400 905 400M895 276Q905 290 925 278 920 290 900 288M940 345C960 330 985 340 992 352M940 345C950 360 970 360 980 358" /><circle cx="899" cy="243" r="5" /><circle cx="922" cy="248" r="5" /><path d="M960 215 970 203 985 218 1000 212 1002 226 1018 230 1014 244 1034 252 1020 264 1040 275 1024 288 1042 300 1024 310 1040 325 1022 335 1036 350 1022 360" />
                  <path d="M675 378H700V412H732V385H760V415H738V440L742 462 728 460 725 445 700 440 698 460H686L690 425" />
                </g>
                <g transform="translate(373 323) scale(.3333)">
                  <path d="M690 620C700 600 705 640 710 660 720 690 750 690 765 690M690 620C685 660 695 700 715 715 725 740 700 770 715 785 745 800 775 785 765 770 740 760 740 750 800 745L805 785 855 788Q860 770 835 765L845 705M762 680C760 660 785 650 800 660 815 680 810 715 790 718 770 715 760 700 762 680zM790 655C800 625 850 620 865 650 890 670 880 700 860 704L810 700" /><circle cx="838" cy="666" r="4" /><ellipse cx="866" cy="676" rx="8" ry="6" />
                </g>
              </g>
            </defs>
            <use href="#tile" x="-540" />
            <use href="#tile" />
            <use href="#tile" x="540" />
            <use href="#tile" x="1080" />
            <use href="#tile" x="1620" />
          </svg>

          <div class="sticky-days">
            <span class="chip chip-leaving"></span>
            <span class="chip">THURSDAY</span>
          </div>

          <div class="messages">
            <div class="message out first">
              <svg class="tail"><use href="#tail-out" /></svg>
              <p dir="rtl" lang="ar">صباح الخير</p>
              <div class="meta"><time>9:01 am</time><svg class="ticks"><use href="#ticks" /></svg></div>
            </div>

            <div class="message in first">
              <svg class="tail"><use href="#tail-in" /></svg>
              <p dir="rtl" lang="ar">صباح النور</p>
              <div class="meta"><time>9:01 am</time></div>
            </div>

            <div class="message out first link">
              <svg class="tail"><use href="#tail-out" /></svg>
              <button type="button" class="forward" aria-label="Forward">
                <svg width="25" height="25" viewBox="0 0 25 25"><path d="M14.200 9.900V6.700l6.800 5.700-6.800 5.600v-3.300c-4.500-.1-7.600 1-10 4 1-4.600 4.100-8 10-8.800z" /></svg>
              </button>
              <div class="preview">
                <strong>Select Your Live Sessions Dates</strong>
                <span>Radiance Group Customer Services</span>
                <small>docs.google.com</small>
              </div>
              <a href="https://docs.google.com/forms/d/e/1FAIpQLSfGXJ9mefNV7hFYtOOw7UWwIzAnbFvxc3N9qw7PId-cOnLFhw/viewform?usp=pp_url">https://docs.google.com/forms/d/e/1FAIpQLSfGXJ9mefNV7hFYtOOw7UWwIzAnbFvxc3N9qw7PId-<wbr>cOnLFhw/viewform?usp=pp_url</a>
              <div class="meta"><time>9:01 am</time><svg class="ticks"><use href="#ticks" /></svg></div>
            </div>

            <div class="message out">
              <p dir="rtl" lang="ar">حضرتك هتختار موعدين من خلال اللينك</p>
              <div class="meta"><time>9:01 am</time><svg class="ticks"><use href="#ticks" /></svg></div>
            </div>

            <div class="message in first">
              <svg class="tail"><use href="#tail-in" /></svg>
              <p dir="rtl" lang="ar">تمام تمام</p>
              <div class="meta"><time>9:02 am</time></div>
            </div>

            <span class="chip day">TODAY</span>

            <div class="message out first">
              <svg class="tail"><use href="#tail-out" /></svg>
              <p dir="rtl" lang="ar">صباح الخير حضرتك بدأت في متابعه المحاضرات تمام ؟</p>
              <div class="meta"><time>10:09 am</time><svg class="ticks"><use href="#ticks" /></svg></div>
            </div>

            <div class="message in first">
              <svg class="tail"><use href="#tail-in" /></svg>
              <p dir="rtl" lang="ar">صباح النور</p>
              <div class="meta"><time>10:09 am</time></div>
            </div>

            <div class="message in">
              <p dir="rtl" lang="ar">وارسلت اول تاسك</p>
              <div class="meta"><time>10:10 am</time></div>
            </div>

            <div class="message in">
              <p dir="rtl" lang="ar">وشغال على الثانى</p>
              <div class="meta"><time>10:10 am</time></div>
            </div>

            <div class="message out first">
              <svg class="tail"><use href="#tail-out" /></svg>
              <p dir="rtl" lang="ar">تمام شكرا لحضرتك بالتوفيق</p>
              <div class="meta"><time>10:12 am</time><svg class="ticks"><use href="#ticks" /></svg></div>
            </div>
          </div>

          <div class="scrollbar"><div class="thumb"></div></div>
        </div>
      </main>
    </div>
  </body>
</html>
```

FILE: styles.css
```css
* {
  box-sizing: border-box;
}
body {
  margin: 0;
  min-height: 100vh;
  background: linear-gradient(#00a884 125px, #e1dfdc 125px, #d3d6d9 100%);
  font-family: "Open Sans", "DejaVu Sans", sans-serif;
  color: #111b21;
}
h1,
p {
  margin: 0;
  font-weight: 400;
}
button {
  padding: 0;
  border: none;
  background: none;
  cursor: pointer;
}
.defs {
  position: absolute;
}
.app {
  display: flex;
  height: 100vh;
  padding: 17px 10px 2px 0;
}

/* left edge of the chat list */
.side {
  display: flex;
  flex-direction: column;
  width: 27px;
  background-color: #fff;
  overflow: hidden;
}
.side-header {
  height: 59px;
  background-color: #f0f2f5;
  border-right: 1px solid #d1d7db;
}
.side-search {
  display: flex;
  align-items: center;
  justify-content: flex-end;
  height: 50px;
  padding-right: 12px;
  border-bottom: 1px solid #e9edef;
}
.side-search path {
  stroke: #8696a0;
  stroke-width: 2;
}
.side-row {
  display: flex;
  flex-shrink: 0;
  justify-content: flex-end;
  height: 70px;
}
.side-row.active {
  height: 72px;
  margin-right: 2px;
  padding: 18px 14px 0 0;
  background-color: #f0f2f5;
  color: #667781;
  font-family: Roboto, sans-serif;
  font-size: 11px;
  line-height: 20px;
}

.chat {
  display: flex;
  flex: 1;
  flex-direction: column;
  min-width: 0;
}
.chat-header {
  display: flex;
  align-items: center;
  height: 60px;
  padding: 0 24px 2px 16px;
  background-color: #f0f2f5;
}
.contact {
  flex: 1;
  margin-left: 15px;
}
.contact h1 {
  font-size: 15px;
  line-height: 20px;
}
.contact p {
  font-family: Roboto, sans-serif;
  font-size: 13px;
  line-height: 20px;
  color: #667781;
}
.actions {
  display: flex;
  gap: 26px;
}
.icon-button {
  display: flex;
  fill: #54656f;
}

.conversation {
  position: relative;
  display: flex;
  flex: 1;
  min-height: 0;
  overflow: hidden;
  background-color: #7acba5;
}
.wallpaper {
  position: absolute;
  top: 0;
  left: 0;
  width: 100%;
  height: 100%;
}
.doodle,
.doodle-mark {
  fill: none;
  stroke: #8dd6b1;
  stroke-width: 4;
  stroke-linecap: round;
  stroke-linejoin: round;
}
.doodle-mark {
  overflow: visible;
}
.outline-text {
  font-family: "Open Sans", sans-serif;
  font-size: 68px;
  font-weight: 700;
  stroke-width: 3;
}
.outline-text.small {
  font-size: 48px;
}
.doodle polyline {
  stroke: none;
}
.dots {
  marker: url(#m-dot);
}
.rings {
  marker: url(#m-ring);
}
.bigs {
  marker: url(#m-big);
}
.stars {
  marker: url(#m-star);
}
.sparks {
  marker: url(#m-spark);
}
.hearts {
  marker: url(#m-heart);
}
.drops {
  marker: url(#m-drop);
}

.chip {
  padding: 6px 12px;
  border-radius: 8px;
  background-color: #fbfefe;
  box-shadow: 0 1px 1px rgba(11, 20, 26, 0.13);
  color: #54656f;
  font-size: 12px;
  line-height: 20px;
}
.chip.day {
  align-self: center;
  margin-top: 12px;
}
.sticky-days {
  position: absolute;
  top: 0;
  left: 0;
  right: 6px;
  display: flex;
  flex-direction: column;
  align-items: center;
}
.chip-leaving {
  width: 85px;
  height: 9px;
  padding: 0;
  border-radius: 0 0 8px 8px;
}

.messages {
  position: relative;
  display: flex;
  flex: 1;
  flex-direction: column;
  min-width: 0;
  padding: 10px 63px 20px;
}
.message {
  position: relative;
  max-width: 65%;
  margin-top: 2px;
  padding: 7px 8px 2px 9px;
  border-radius: 8px;
  box-shadow: 0 1px 1px rgba(11, 20, 26, 0.13);
  font-size: 14px;
  line-height: 19px;
}
.message.first {
  margin-top: 12px;
}
.message.in {
  align-self: flex-start;
  background-color: #fff;
}
.message.out {
  align-self: flex-end;
  background-color: #d9fdd3;
}
.message p {
  height: 26px;
  font-family: "DejaVu Sans", sans-serif;
  font-size: 14px;
}
.tail {
  position: absolute;
  top: 0;
  width: 8px;
  height: 13px;
}
.in .tail {
  left: -8px;
  fill: #fff;
}
.out .tail {
  right: -8px;
  fill: #d9fdd3;
}
.in.first {
  border-top-left-radius: 0;
}
.out.first {
  border-top-right-radius: 0;
}
.meta {
  display: flex;
  align-items: center;
  justify-content: flex-end;
  gap: 3px;
  height: 17px;
  color: #667781;
  font-family: Roboto, sans-serif;
  font-size: 11px;
  line-height: 17px;
}
.ticks {
  width: 16px;
  height: 11px;
  fill: none;
  stroke: #738a90;
}

.message.link {
  width: 642px;
  padding: 3px;
}
.preview {
  display: flex;
  flex-direction: column;
  margin-bottom: 6px;
  padding: 7px 10px 5px;
  border-radius: 6px;
  background-color: #d1f4cc;
  font-size: 12px;
  line-height: 20px;
}
.preview strong {
  font-weight: 400;
}
.preview small {
  color: #8fae93;
  font-size: 12px;
}
.link a {
  display: block;
  padding: 0 6px;
  color: #027eb5;
  font-family: Roboto, sans-serif;
  text-decoration: none;
}
.link .meta {
  margin-top: -12px;
  padding-right: 4px;
}
.forward {
  position: absolute;
  top: 51px;
  left: -31px;
  width: 25px;
  height: 25px;
  border-radius: 50%;
  background-color: #5fa183;
}
.forward svg {
  display: block;
  fill: #fff;
}

.scrollbar {
  position: relative;
  display: flex;
  flex-direction: column;
  justify-content: flex-end;
  width: 6px;
  background-color: rgba(255, 255, 255, 0.1);
}
.thumb {
  height: 25%;
  background-color: rgba(11, 20, 26, 0.2);
}
```
